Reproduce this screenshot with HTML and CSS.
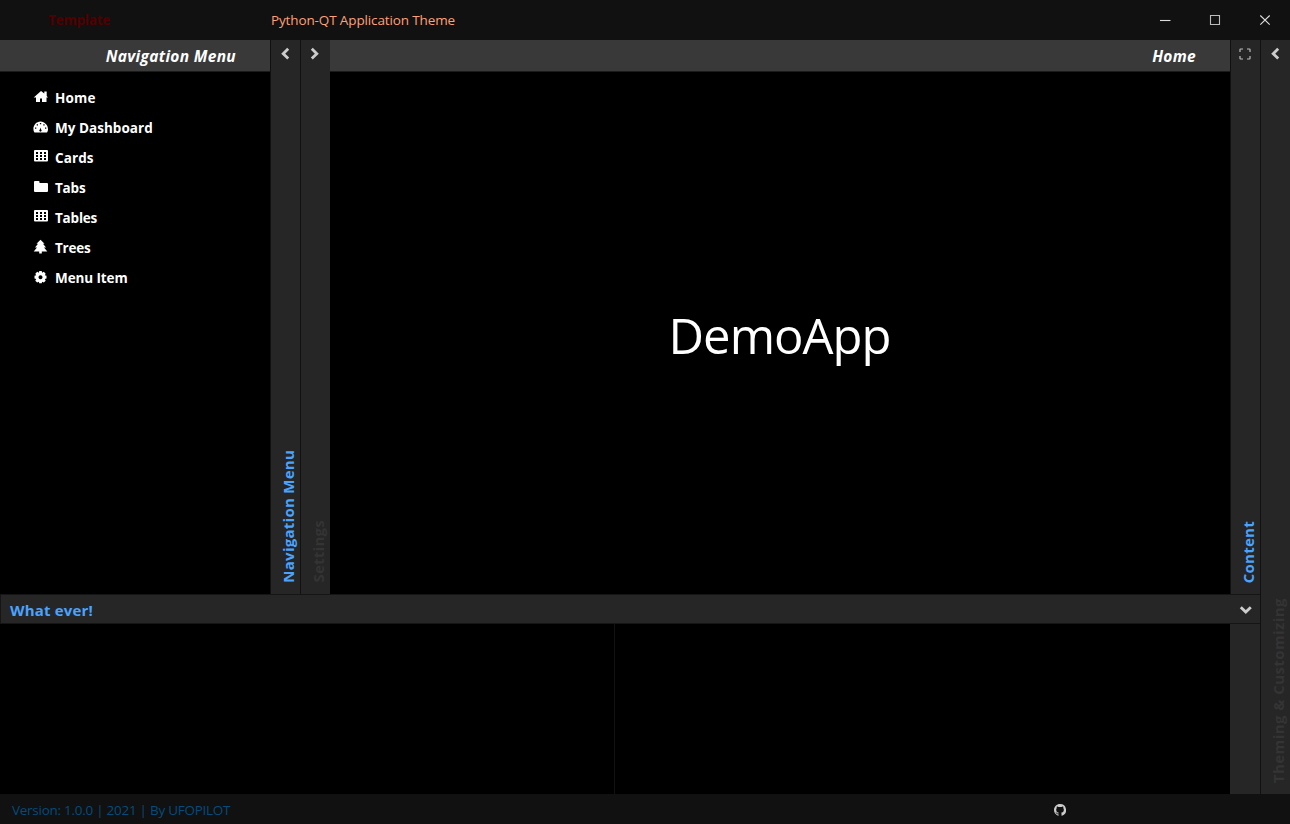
FILE: index.html
```html
<!DOCTYPE html>
<html lang="en">
<head>
<meta charset="utf-8">
<title>Python-QT Application Theme</title>
<link rel="stylesheet" href="styles.css">
</head>
<body>
<div class="app">
  <header class="titlebar">
    <div class="brand">Template</div>
    <div class="title">Python-QT Application Theme</div>
    <div class="window-buttons">
      <svg viewBox="0 0 50 40"><path d="M20 20.500h10.500"/></svg>
      <svg class="maximize" viewBox="0 0 50 40"><path d="M20.500 15.500h9v9h-9z"/></svg>
      <svg viewBox="0 0 50 40"><path d="M20.300 15.500l9.400 9.200M29.700 15.500l-9.400 9.200"/></svg>
    </div>
  </header>
  <div class="main">
    <div class="workspace">
      <div class="top">
        <nav class="nav">
          <h2 class="panel-head"><span>Navigation Menu</span></h2>
          <ul class="menu">
            <li><svg viewBox="0 0 16 16"><path d="M8 2L.7 8.500H3V13h4V9.500h2V13h4.500V8.500H15L13.700 7V2.500h-2.400v2z"/></svg><span class="i-home">Home</span></li>
            <li><svg class="low" viewBox="0 0 16 16"><path fill-rule="evenodd" d="M1.500 12.600C-1.500 8 2 1.500 7.500 1.500S17 8 14 12.600zM6.900 3v1.200h1.300V3zM3.700 4.300v1.200H5V4.300zM10.300 4.300v1.200h1.300V4.300zM2 7.500v1.200h1.300V7.500zM12 7.500v1.200h1.300V7.500zM7.700 7.500L6.900 9.500a1.100 1.100 0 1 0 1.200.1z"/></svg><span class="i-dash">My Dashboard</span></li>
            <li><svg viewBox="0 0 16 16"><path fill-rule="evenodd" d="M2 1h12q1 0 1 1v9.500q0 1-1 1H2q-1 0-1-1V2q0-1 1-1zM3 3v2h2V3zM7 3v2h2V3zM11 3v2h2V3zM3 6v2h2V6zM7 6v2h2V6zM11 6v2h2V6zM3 9v2h2V9zM7 9v2h2V9zM11 9v2h2V9z"/></svg><span class="i-cards">Cards</span></li>
            <li><svg viewBox="0 0 16 16"><path d="M1 3q0-1 1-1h3.500q1 0 1 1v1H14q1 0 1 1v7q0 1-1 1H2q-1 0-1-1z"/></svg><span class="i-tabs">Tabs</span></li>
            <li><svg viewBox="0 0 16 16"><path fill-rule="evenodd" d="M2 1h12q1 0 1 1v9.500q0 1-1 1H2q-1 0-1-1V2q0-1 1-1zM3 3v2h2V3zM7 3v2h2V3zM11 3v2h2V3zM3 6v2h2V6zM7 6v2h2V6zM11 6v2h2V6zM3 9v2h2V9zM7 9v2h2V9zM11 9v2h2V9z"/></svg><span class="i-tables">Tables</span></li>
            <li><svg viewBox="0 0 16 16"><path d="M7.500.800L3.500 4.800h1.500L2 8.500h2L.7 12.500h5.500V14.500h2.600v-2h5.500L11 8.500h2L10 4.800h1.500z"/></svg><span class="i-trees">Trees</span></li>
            <li><svg class="low" viewBox="0 0 16 16"><path fill-rule="evenodd" d="M6.300 1h2.400l.5 1.700 1.600-.9 1.900 1.900-.9 1.600 1.700.5v2.800l-1.700.5.9 1.600-1.900 1.900-1.600-.9-.5 1.500H6.300l-.5-1.500-1.600.9-1.900-1.900.9-1.600-1.700-.5V5.800l1.700-.5-.9-1.600 1.900-1.900 1.600.9zM7.500 5.200a2 2 0 1 0 .01 0z"/></svg><span class="i-item">Menu Item</span></li>
          </ul>
        </nav>
        <aside class="rail">
          <svg class="chev left" viewBox="0 0 14 14"><path d="M9.200 1.800L4.200 6.700l5 4.900"/></svg>
          <span class="side">Navigation Menu</span>
        </aside>
        <aside class="rail">
          <svg class="chev" viewBox="0 0 14 14"><path d="M3.800 1.800l5 4.900-5 4.900"/></svg>
          <span class="side off">Settings</span>
        </aside>
        <section class="content">
          <h2 class="panel-head"><span>Home</span></h2>
          <div class="stage"><span>DemoApp</span></div>
        </section>
        <aside class="rail">
          <svg class="chev thin" viewBox="0 0 14 14"><path d="M2 5V2.500q0-.5.500-.5H5M9 2h2.500q.5 0 .5.500V5M12 9v2.500q0 .5-.5.500H9M5 12H2.500q-.5 0-.5-.5V9"/></svg>
          <span class="side">Content</span>
        </aside>
      </div>
      <div class="drawer-head">
        <span class="drawer-title">What ever!</span>
        <svg class="chev down" viewBox="0 0 14 14"><path d="M1.800 4.200l5 4.900 5-4.900"/></svg>
      </div>
      <div class="drawer">
        <div class="pane pane-first"></div>
        <div class="pane"></div>
        <div class="drawer-rail"></div>
      </div>
    </div>
    <aside class="rail">
      <svg class="chev left" viewBox="0 0 14 14"><path d="M9.200 1.800L4.200 6.700l5 4.900"/></svg>
      <span class="side off wide">Theming &amp; Customizing</span>
    </aside>
  </div>
  <footer class="statusbar">
    <span class="version">Version: 1.0.0 | 2021 | By UFOPILOT</span>
    <svg class="github" viewBox="0 0 16 16"><path d="M8 0C3.580 0 0 3.580 0 8c0 3.540 2.290 6.530 5.470 7.590.4.070.55-.17.55-.38v-1.490c-2.010.37-2.530-.49-2.690-.94-.09-.23-.48-.94-.82-1.130-.28-.15-.68-.52-.01-.53.630-.01 1.080.58 1.230.82.720 1.210 1.870.87 2.330.66.070-.52.280-.87.510-1.070-1.780-.2-3.640-.89-3.640-3.950 0-.87.310-1.590.82-2.150-.08-.2-.36-1.020.08-2.120 0 0 .67-.21 2.200.82a7.600 7.600 0 0 1 4 0c1.530-1.040 2.200-.82 2.200-.82.440 1.100.16 1.920.08 2.120.51.560.82 1.270.82 2.150 0 3.070-1.870 3.750-3.650 3.950.290.250.54.730.54 1.480v2.200c0 .21.150.46.550.38A8 8 0 0 0 8 0z"/></svg>
  </footer>
</div>
</body>
</html>
```

FILE: styles.css
```css
* { box-sizing: border-box; }
body {
  margin: 0;
  background: #000;
  color: #fff;
  font-family: "Open Sans", "Noto Sans", sans-serif;
  font-size: 14px;
  overflow: hidden;
}
svg { display: block; flex: none; }
.app { display: flex; flex-direction: column; width: 1290px; height: 824px; }

.titlebar { display: flex; flex: none; height: 40px; line-height: 40px; background: #111; }
.brand { width: 271px; padding-left: 48px; color: #500000; font-size: 13.500px; font-weight: 700; letter-spacing: -0.200px; }
.title { flex: 1; color: #ffa07a; font-size: 13.500px; letter-spacing: -0.130px; white-space: nowrap; }
.window-buttons { display: flex; }
.window-buttons svg { width: 50px; height: 40px; fill: none; stroke: #ddd; stroke-width: 1.100; }
.window-buttons .maximize { stroke: #bbb; }

.main { display: flex; flex: 1; min-height: 0; }
.workspace { display: flex; flex-direction: column; flex: 1; min-width: 0; }
.top { display: flex; height: 554px; }
.nav { width: 270px; }
.panel-head {
  display: flex;
  justify-content: flex-end;
  height: 32px;
  margin: 0;
  padding-right: 34px;
  background: #393939;
  border-bottom: 1px solid #1b1b1b;
  font-size: 15.500px;
  font-style: italic;
  font-weight: 700;
  letter-spacing: 0.320px;
  line-height: 32px;
  white-space: nowrap;
}
.menu { margin: 0; padding: 11px 0 0 33px; list-style: none; }
.menu li { display: flex; gap: 6px; height: 30px; line-height: 30px; font-weight: 700; }
.menu svg { width: 16px; height: 16px; margin-top: 6px; fill: #fff; }
.menu .low { margin-top: 7px; }
.menu span { font-size: 13.500px; }
.menu .i-home { letter-spacing: 0.200px; }
.menu .i-dash { letter-spacing: 0.030px; }
.menu .i-cards { letter-spacing: 0.100px; }
.menu .i-tabs, .menu .i-tables, .menu .i-trees { letter-spacing: -0.200px; }
.menu .i-item { letter-spacing: -0.100px; }

.rail {
  display: flex;
  flex-direction: column;
  justify-content: space-between;
  flex: none;
  width: 30px;
  padding: 7px 0 11px;
  background: #262626;
  border-left: 1px solid #111;
}
.chev { width: 14px; height: 14px; margin-left: 7px; fill: none; stroke: #ccc; stroke-width: 2.800; }
.left { margin-left: 8px; }
.thin { stroke: #bbb; stroke-width: 1.200; }
.side {
  width: 22px;
  margin-left: 6px;
  color: #4aa3ff;
  font-size: 15px;
  font-weight: 700;
  letter-spacing: 0.260px;
  line-height: 22px;
  white-space: nowrap;
  writing-mode: vertical-rl;
  transform: rotate(180deg);
}
.off { color: #343434; }
.wide { letter-spacing: 0.420px; }

.content { flex: 1; min-width: 0; display: flex; flex-direction: column; }
.stage {
  flex: 1;
  display: flex;
  align-items: center;
  justify-content: center;
  padding: 4px 1px 0 0;
  font-size: 49px;
  line-height: 60px;
  letter-spacing: -1px;
}

.drawer-head {
  display: flex;
  align-items: center;
  justify-content: space-between;
  height: 30px;
  padding: 2px 7px 0 9px;
  background: #262626;
  border: 1px solid #151515;
  border-right: 0;
}
.drawer-title { color: #4aa3ff; font-size: 15px; font-weight: 700; letter-spacing: 0.180px; line-height: 28px; }
.down { margin: 0; }
.drawer { display: flex; flex: 1; }
.pane { flex: 1; }
.pane-first { flex: none; width: 615px; border-right: 1px solid #111; }
.drawer-rail { width: 30px; background: #262626; }

.statusbar { display: flex; align-items: center; flex: none; height: 30px; padding: 2px 0 0 12px; background: #111; }
.version { width: 1042px; color: #054b7c; font-size: 13.500px; letter-spacing: -0.270px; line-height: 28px; }
.github { width: 12px; height: 12px; fill: #ccc; }
```
